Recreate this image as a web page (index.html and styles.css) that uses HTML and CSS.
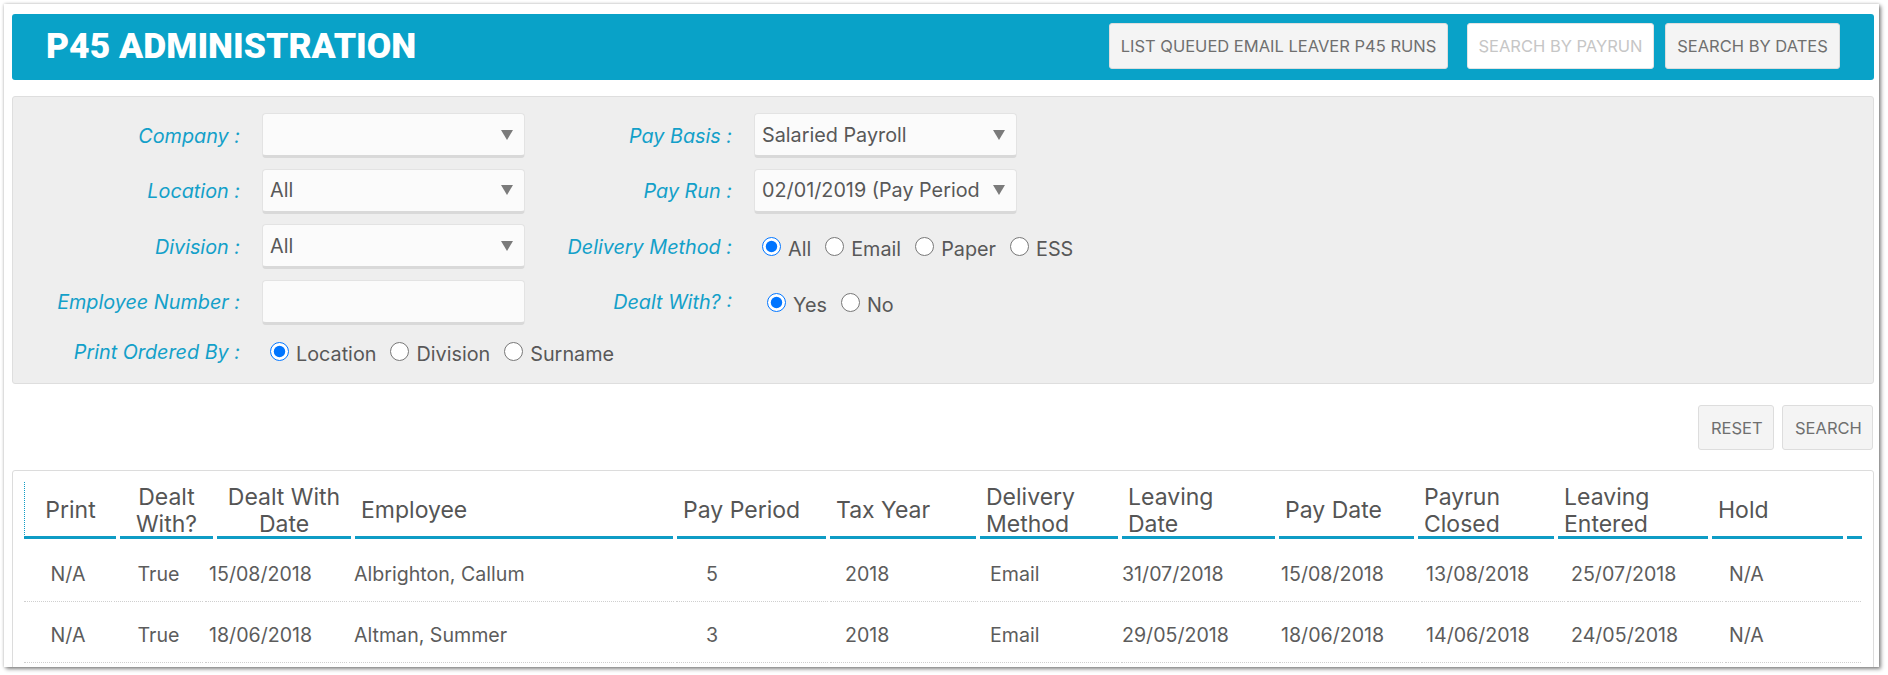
FILE: index.html
```html
<!DOCTYPE html>
<html lang="en">
<head>
<meta charset="utf-8">
<title>P45 Administration</title>
<link rel="stylesheet" href="styles.css">
</head>
<body>
<div class="window">
  <header class="titlebar">
    <h1 class="title">P45 ADMINISTRATION</h1>
    <div class="actions">
      <button class="btn btn-list">LIST QUEUED EMAIL LEAVER P45 RUNS</button>
      <button class="btn btn-payrun btn-disabled">SEARCH BY PAYRUN</button>
      <button class="btn btn-dates">SEARCH BY DATES</button>
    </div>
  </header>

  <section class="filters">
    <div class="lbl">Company :</div>
    <div class="field"><div class="select"><span class="select-text"></span><span class="arrow"></span></div></div>
    <div class="lbl">Pay Basis :</div>
    <div class="field"><div class="select"><span class="select-text">Salaried Payroll</span><span class="arrow"></span></div></div>

    <div class="lbl">Location :</div>
    <div class="field"><div class="select"><span class="select-text">All</span><span class="arrow"></span></div></div>
    <div class="lbl">Pay Run :</div>
    <div class="field"><div class="select"><span class="select-text">02/01/2019 (Pay Period</span><span class="arrow"></span></div></div>

    <div class="lbl">Division :</div>
    <div class="field"><div class="select"><span class="select-text">All</span><span class="arrow"></span></div></div>
    <div class="lbl">Delivery Method :</div>
    <div class="field radios">
      <label class="opt"><input type="radio" name="dm" checked><span>All</span></label>
      <label class="opt"><input type="radio" name="dm"><span>Email</span></label>
      <label class="opt"><input type="radio" name="dm"><span>Paper</span></label>
      <label class="opt"><input type="radio" name="dm"><span>ESS</span></label>
    </div>

    <div class="lbl">Employee Number :</div>
    <div class="field"><div class="select input"></div></div>
    <div class="lbl">Dealt With? :</div>
    <div class="field radios radios-dealt">
      <label class="opt"><input type="radio" name="dw" checked><span>Yes</span></label>
      <label class="opt"><input type="radio" name="dw"><span>No</span></label>
    </div>

    <div class="lbl">Print Ordered By :</div>
    <div class="field radios">
      <label class="opt"><input type="radio" name="po" checked><span>Location</span></label>
      <label class="opt"><input type="radio" name="po"><span>Division</span></label>
      <label class="opt"><input type="radio" name="po"><span>Surname</span></label>
    </div>
  </section>

  <div class="toolbar">
    <button class="btn btn-small">RESET</button>
    <button class="btn btn-small">SEARCH</button>
  </div>

  <section class="card">
    <div class="thead">
      <div class="th th-first center">Print</div>
      <div class="th center">Dealt<br>With?</div>
      <div class="th center">Dealt With<br>Date</div>
      <div class="th">Employee</div>
      <div class="th">Pay Period</div>
      <div class="th">Tax Year</div>
      <div class="th">Delivery<br>Method</div>
      <div class="th">Leaving<br>Date</div>
      <div class="th">Pay Date</div>
      <div class="th">Payrun<br>Closed</div>
      <div class="th">Leaving<br>Entered</div>
      <div class="th">Hold</div>
      <div class="th"></div>
    </div>
    <div class="tbody">
      <div class="td c1">N/A</div>
      <div class="td c2">True</div>
      <div class="td c3">15/08/2018</div>
      <div class="td c4">Albrighton, Callum</div>
      <div class="td c5">5</div>
      <div class="td c6">2018</div>
      <div class="td c7">Email</div>
      <div class="td c8">31/07/2018</div>
      <div class="td c9">15/08/2018</div>
      <div class="td c10">13/08/2018</div>
      <div class="td c11">25/07/2018</div>
      <div class="td c12">N/A</div>

      <div class="td c1">N/A</div>
      <div class="td c2">True</div>
      <div class="td c3">18/06/2018</div>
      <div class="td c4">Altman, Summer</div>
      <div class="td c5">3</div>
      <div class="td c6">2018</div>
      <div class="td c7">Email</div>
      <div class="td c8">29/05/2018</div>
      <div class="td c9">18/06/2018</div>
      <div class="td c10">14/06/2018</div>
      <div class="td c11">24/05/2018</div>
      <div class="td c12">N/A</div>
    </div>
  </section>
</div>
</body>
</html>
```

FILE: styles.css
```css
* { box-sizing: border-box; }

html, body {
  margin: 0;
  padding: 0;
  background: #ffffff;
}

body {
  font-family: Inter, "Noto Sans", "Liberation Sans", sans-serif;
  color: #585858;
  width: 1888px;
  height: 675px;
  overflow: hidden;
}

.window {
  margin: 4px 0 0 4px;
  width: 1875px;
  height: 663px;
  background: #ffffff;
  overflow: hidden;
  box-shadow: 0 0 3px rgba(0, 0, 0, 0.22), 2px 2px 4px rgba(0, 0, 0, 0.45);
  padding: 10px 5px 0 8px;
}

/* ---------- title bar ---------- */
.titlebar {
  height: 66px;
  background: #09a2c8;
  border-radius: 3px;
  display: flex;
  align-items: center;
  justify-content: space-between;
  padding: 0 34px 2px 34px;
}

.title {
  margin: 0;
  font-family: Roboto, "Liberation Sans", sans-serif;
  font-weight: 900;
  font-size: 35.5px;
  color: #ffffff;
}

.actions {
  display: flex;
  align-items: center;
}

.btn {
  height: 46px;
  background: #f4f4f4;
  border: 1px solid #dddddd;
  border-radius: 3px;
  font-family: Inter, "Noto Sans", "Liberation Sans", sans-serif;
  font-size: 16.5px;
  color: #6f6f6f;
  padding: 0;
  white-space: nowrap;
}

.btn-list { width: 339px; }
.btn-payrun { width: 187px; margin-left: 19px; }
.btn-dates { width: 175px; margin-left: 11px; }

.btn-disabled {
  background: #ffffff;
  color: #c6c6c6;
  border-color: #e4e4e4;
}

/* ---------- filters ---------- */
.filters {
  margin-top: 16px;
  background: #eeeeee;
  border: 1px solid #dedede;
  border-radius: 3px;
  height: 288px;
  padding: 16px 0 0 0;
  display: grid;
  grid-template-columns: 249px 263px 229px 263px;
  grid-template-rows: 45px 45px 45px 45px 33px;
  row-gap: 10.5px;
  align-items: center;
}

.lbl {
  text-align: right;
  padding-right: 22px;
  font-style: italic;
  font-size: 19.8px;
  color: #13a0c9;
  white-space: nowrap;
}

.field {
  white-space: nowrap;
}

.select {
  height: 45px;
  background: #fbfbfb;
  border: 1px solid #e3e3e3;
  border-bottom: 3px solid #d9d9d9;
  border-radius: 4px;
  display: flex;
  align-items: center;
  padding: 0 11px 0 7px;
}

.select-text {
  flex: 1;
  overflow: hidden;
  white-space: nowrap;
  font-size: 19.8px;
  color: #585858;
}

.arrow {
  width: 0;
  height: 0;
  border-left: 6.5px solid transparent;
  border-right: 6.5px solid transparent;
  border-top: 10px solid #7b7b7b;
  margin-left: 6px;
}

.radios {
  display: flex;
  align-items: center;
  padding-left: 8px;
}

.radios-dealt {
  padding-left: 13px;
}

.opt {
  display: flex;
  align-items: center;
  margin-right: 14px;
  font-size: 19.8px;
  color: #585858;
}

.opt input {
  width: 19px;
  height: 19px;
  margin: 0 7px 0 0;
}

.opt span {
  padding-top: 5px;
}

/* ---------- toolbar ---------- */
.toolbar {
  display: flex;
  justify-content: flex-end;
  margin-top: 21px;
  padding-right: 1px;
}

.btn-small {
  height: 45px;
  padding: 0 12px;
  margin-left: 8px;
}

.toolbar .btn-small:first-child { width: 76px; }
.toolbar .btn-small:last-child { width: 91px; }

/* ---------- grid ---------- */
.card {
  margin-top: 20px;
  border: 1px solid #dcdcdc;
  border-radius: 3px;
  padding: 11px 11px 0 11px;
  height: 300px;
}

.thead {
  display: grid;
  grid-template-columns: 92px 93px 134px 318px 149px 146px 138px 153px 135px 136px 150px 131px 15px;
  column-gap: 4px;
}

.th {
  height: 57px;
  border-bottom: 3px solid #0e9cc5;
  display: flex;
  align-items: center;
  padding: 3px 0 0 6px;
  font-size: 23px;
  line-height: 27px;
  color: #555555;
  white-space: nowrap;
}

.th.center {
  justify-content: center;
  text-align: center;
  padding-left: 0;
}

.th-first {
  border-left: 1px dotted #0e9cc5;
}

.tbody {
  margin-top: 2px;
  display: grid;
  grid-template-columns: 88px 89px 142px 325px 152px 148px 139px 156px 140px 144px 156px 136px;
  column-gap: 2px;
}

.td {
  height: 61px;
  border-bottom: 1px dotted #cfcfcf;
  display: flex;
  align-items: center;
  padding-top: 5px;
  font-size: 19.6px;
  color: #5c5c5c;
  white-space: nowrap;
}

.c1, .c2 { justify-content: center; }
.c3 { padding-left: 4px; }
.c4 { padding-left: 5px; }
.c5 { padding-left: 30px; }
.c6 { padding-left: 15px; }
.c7 { padding-left: 10px; }
.c8 { padding-left: 1px; }
.c9 { padding-left: 2px; }
.c10 { padding-left: 5px; }
.c11 { padding-left: 4px; }
.c12 { padding-left: 4px; }
```
